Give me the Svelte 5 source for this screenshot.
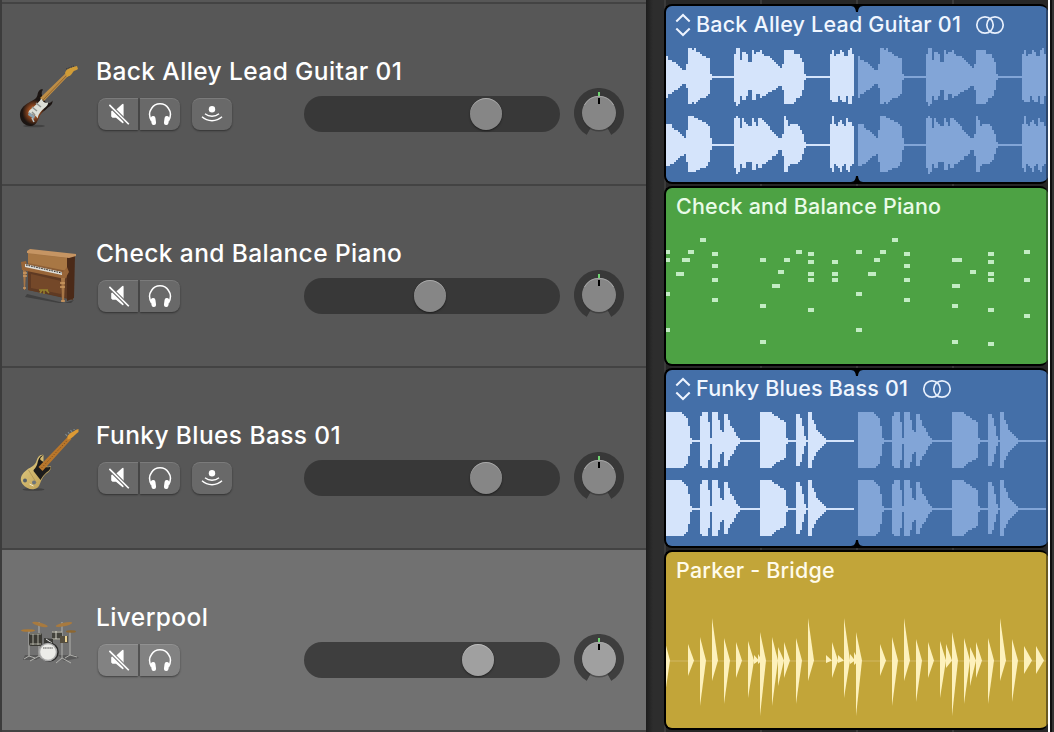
<script>
  // Waveform runs: [columns, units above the centre line, units below it]; one column is 2px wide.
  const leadTop = [
    [1,10,10],[2,8,8],[1,7,7],[1,7,6],[1,6,6],[1,5,5],[1,4,4],[2,3,3],[1,6,5],
    [2,14,13],[1,13,12],[1,14,13],[1,12,12],[1,12,11],[1,11,10],[2,10,10],[1,9,9],[1,9,8],[1,1,1],[11,0,0],
    [1,11,12],[1,14,14],[1,14,13],[1,8,9],[2,12,11],[1,11,9],[2,7,6],[1,13,11],[1,11,11],[2,12,8],[1,13,10],[1,11,9],
    [1,10,9],[1,10,8],[1,10,7],[1,9,7],[1,8,6],[1,7,6],[1,6,5],[1,5,4],[1,4,4],[1,6,6],
    [5,13,13],[1,11,12],[2,11,10],[1,9,9],[1,7,6],[1,1,1],[12,0,0],
    [1,11,11],[1,13,12],[1,10,12],[1,11,12],[1,11,9],[1,13,11],[1,12,12],[1,10,12],[1,10,9],[1,13,13],[1,14,13],[1,11,9]
  ];
  const leadBottom = [
    [1,10,10],[1,10,10],[1,10,9],[1,8,9],[1,7,8],[1,7,7],[1,6,6],[1,5,5],[1,4,5],[1,3,4],[1,7,8],
    [2,14,13],[1,14,13],[1,13,13],[1,13,12],[1,12,12],[1,12,11],[1,11,11],[1,11,11],[1,10,10],[1,9,8],[1,3,2],[11,0,0],
    [1,13,11],[1,14,14],[1,13,13],[1,8,9],[1,13,11],[1,11,11],[1,10,8],[2,9,8],[1,13,12],[1,11,12],[1,9,9],[2,13,11],[1,12,9],
    [1,11,9],[1,10,8],[1,9,7],[1,7,7],[1,6,5],[1,5,5],[1,4,4],[1,3,2],[1,3,2],[1,5,5],
    [1,14,13],[1,12,13],[1,9,10],[2,10,9],[2,10,9],[1,9,8],[1,7,7],[1,5,4],[1,1,1],[12,0,0],
    [1,10,11],[1,14,13],[1,10,9],[1,9,10],[1,11,11],[1,12,13],[1,10,10],[1,9,9],[1,13,12],[1,11,13],[1,11,10],[1,9,9]
  ];
  const bass = [
    [8,14,13],[1,13,13],[1,12,12],[1,11,11],[1,7,7],[1,1,1],[4,0,0],
    [1,12,12],[3,14,13],[1,9,9],[1,1,1],[3,14,13],[1,10,10],[1,5,6],[1,4,5],[2,13,12],[1,10,9],[1,7,7],[1,6,6],[1,4,4],[1,2,2],[1,1,1],[10,0,0],
    [6,14,13],[1,13,12],[1,12,11],[1,12,10],[1,11,10],[1,10,9],[1,10,9],[1,9,8],[1,1,1],[4,0,0],
    [2,13,12],[1,11,10],[1,7,6],[1,2,2],[1,0,0],[2,14,13],[1,10,9],[1,8,7],[1,5,5],[1,4,4],[1,3,3],[1,2,2],[1,1,1],[14,0,0]
  ];

  function wave(runs, y) {
    let x = 0;
    let d = '';
    for (const [n, up, down] of runs) {
      d += `M${x} ${y - up * 2}h${n * 2}v${(up + down) * 2 + 2}h${-n * 2}z`;
      x += n * 2;
    }
    return d;
  }

  // MIDI notes: [x, y, width] in pixels from the region's corner.
  const notes = [
    [0,62,4],[0,70,4],[16,70,8],[22,62,6],[34,50,6],[46,64,6],[46,76,6],[46,90,6],[46,110,6],[10,84,8],[0,104,4],[0,140,4],
    [94,70,6],[94,116,6],[94,152,6],[106,96,8],[112,82,6],[118,70,6],[130,62,6],[142,64,6],[142,72,6],[142,84,6],[142,90,6],[142,120,6],
    [166,72,6],[166,84,6],[166,90,6],[190,62,6],[190,104,6],[190,140,6],[214,62,6],[208,70,6],[202,84,8],[226,50,6],
    [238,64,6],[238,76,6],[238,90,6],[238,110,6],[286,70,10],[286,96,8],[286,116,6],[286,152,6],[304,82,6],
    [322,64,6],[322,72,6],[322,84,6],[322,90,6],[322,120,6],[322,154,6],[358,62,6],[358,90,6],[358,126,6]
  ];

  // Drum hits: [x, top, bottom, width].
  const hits = [
    [-2,86,149,6],[22,92,124,6],[34,85,154,6],[46,66,129,6],[58,86,152,6],[70,90,126,6],[82,89,146,6],[88,103,112,5],[92,102,112,4],
    [94,80,164,6],[106,85,154,6],[112,95,134,6],[118,90,126,6],[130,86,152,6],[142,66,129,6],[160,103,111,6],[166,90,126,6],[172,103,111,6],
    [178,66,146,6],[184,102,112,5],[188,100,113,5],[190,80,164,6],[214,92,124,6],[226,85,154,6],[238,66,129,6],[250,87,150,6],
    [262,90,126,6],[274,89,146,6],[280,92,116,6],[286,80,164,6],[298,86,152,6],[304,95,134,6],[310,90,126,6],[322,86,152,6],
    [334,66,129,6],[346,87,150,6],[358,94,122,8],[370,94,122,8]
  ];

  const tracks = [
    { name: 'Back Alley Lead Guitar 01', icon: 'strat', input: true, volume: 182, kind: 'audio', color: 'blue', top: leadTop, bottom: leadBottom },
    { name: 'Check and Balance Piano', icon: 'piano', input: false, volume: 126, kind: 'midi', color: 'green' },
    { name: 'Funky Blues Bass 01', icon: 'bass', input: true, volume: 182, kind: 'audio', color: 'blue', top: bass, bottom: bass },
    { name: 'Liverpool', icon: 'drums', input: false, volume: 174, kind: 'drummer', color: 'gold', region: 'Parker - Bridge', selected: true }
  ];
</script>

<div class="window">
  <div class="headers">
    {#each tracks as t}
      <section class="track" class:selected={t.selected}>
        <div class="instrument">
          {#if t.icon === 'strat'}
            <svg width="64" height="66" viewBox="0 0 64 66">
              <defs>
                <radialGradient id="burst" cx=".42" cy=".62" r=".5"><stop offset="0" stop-color="#d87f35"/><stop offset=".35" stop-color="#8c451e"/><stop offset=".7" stop-color="#1c1512"/></radialGradient>
              </defs>
              <ellipse cx="16" cy="61" rx="11" ry="1.300" fill="#333" opacity=".6"/>
              <path d="M25 24.500c-3-1-5 2-5.500 5.500-1 4-4 5-8.500 7.500-6 3.500-9.500 7-9 13.500.5 6 5.500 10.500 11 10 5-.5 6-4 8-8.500 2-5 5-6 8-9 3-2.500 6-4 5.500-8-2 3-5 3.500-7 1.500l-2.500-4.500c-1.500-3-2-5 0-8z" fill="url(#burst)"/>
              <path d="M23.500 33c-2 4-5 6-7 8-3 3-6 4-6 7 3 1 7 1 9 5.500 1-5 4-8 6.500-10s4.500-4 4-6c-3 1-5 0-6.500-4.500z" fill="#dcded6"/>
              <path d="m14 42 5 4m-1-8 5 4m-9 5 3 3" stroke="#8e918c" stroke-width="1.500"/>
              <path d="m11 47 6 4-1 3-6-4z" fill="#8aa2b0"/><path d="m14 53 2 4" stroke="#b8c5c9" stroke-width="1.500"/>
              <path d="m22 33 28-27 2.500 2.500L26 36z" fill="#bd8d46"/><path d="M25 35 51 8" stroke="#855a27" stroke-width=".8"/>
              <path d="M47 8c1-4 5-5 8-6l4-1 1 3c-2 2-4 1-5 3-2 4-4 4-6 5z" fill="#d09c37"/>
              <path d="m48 4 8-3" stroke="#3b3733" stroke-width="1" stroke-dasharray="1.500 1"/>
            </svg>
          {:else if t.icon === 'bass'}
            <svg width="64" height="66" viewBox="0 0 64 66">
              <defs><linearGradient id="cream" x2="1" y2="1"><stop stop-color="#e4cf86"/><stop offset="1" stop-color="#b9994e"/></linearGradient></defs>
              <g transform="translate(-1.500 0)">
              <ellipse cx="17" cy="60.500" rx="11" ry="1.300" fill="#333" opacity=".6"/>
              <path d="M27 26c-4-1-6 3-7 6-2 6-7 6-11 10-5 4-6 9-3 13 3 4 8 6 12 5 5-1 5-5 7-9s4-6 7-8c2-2 3-4 2-6-3 2-5 0-7-3z" fill="url(#cream)"/>
              <path d="M27 26c-4 1-5 4-6 8-1 5-4 6-4 8l7 9c3-5 5-7 8-9 2-2 3-4 1-4-4 1-7-1-6-5l-3-2c-1-2 1-3 3-5z" fill="#1d1c1b"/>
              <path d="m12 41 8 13" stroke="#ad9253" stroke-width=".8"/>
              <circle cx="8.500" cy="51.500" r="2" fill="#566068"/><circle cx="17.500" cy="53.500" r="2" fill="#6c747a"/><path d="m13 55 4 2" stroke="#efe9cf"/>
              <path d="M22 38 52 7l3 3-29 32z" fill="#b8762b"/><path d="m25 39 28-30" stroke="#75471c" stroke-width="1" stroke-dasharray="1 2"/>
              <path d="M51 7c3-4 6-4 8-6l3-1v3c-3 2-4 4-7 6l-4 2z" fill="#dc9a35"/>
              <path d="m49 5 1.500 2m1-4 1.500 2m1-4 1.500 2m1-4 1.500 2" stroke="#7d8c93" stroke-width="1.100"/>
              </g>
            </svg>
          {:else if t.icon === 'piano'}
            <svg class="piano-art" width="58" height="58" viewBox="0 0 58 58">
              <defs><linearGradient id="wood" x2="0" y2="1"><stop stop-color="#a97a48"/><stop offset=".5" stop-color="#7b4f2d"/><stop offset="1" stop-color="#55331d"/></linearGradient></defs>
              <path d="m6 45 37 9 10-3-3 3-12 0L4 48z" fill="#2e2e2e" opacity=".55"/>
              <path d="m7 3 45 4v44l-45-10z" fill="url(#wood)"/>
              <path d="m46 8 8-2-1 43-7 3z" fill="#4b2a18"/>
              <path d="m6 2 3-2 46 5v2l-7 2L6 4z" fill="#c69563"/>
              <path d="m7 5 39 4v13L7 14z" fill="#a87744"/>
              <path d="m7 21 39 8v20L7 41z" fill="#5f3a23"/><path d="m10 25 30 7v13l-30-6z" fill="#744829"/>
              <path d="m0 13 5-1 1 4 36 7 4-5 2 5-4 7L1 21z" fill="#986538"/>
              <path d="m4 15 37 8v3L4 18z" fill="#deded9"/><path d="m5 16 36 8" stroke="#292522" stroke-width="1" stroke-dasharray="1.600 1"/>
              <path d="m2 21 3 1-1 19H3zm38 8h4l-1 24h-2z" fill="#a87646"/>
              <path d="M2 24h4M2 27h4M2 39h3M39 34h5M39 38h5M40 52h4" stroke="#cb9961" stroke-width="1.300"/>
              <path d="M18 41h9m-6 0-2 3m4-3v4m2-4 3 3" stroke="#94812d" stroke-width="1.500"/>
            </svg>
          {:else}
            <svg class="drum-art" width="58" height="48" viewBox="0 0 58 48">
              <path d="M4 35h20l-9 5H2zm33 0h17l4 3-15 3z" fill="#454545" opacity=".55"/>
              <g stroke="#c4c4bf" stroke-width=".8" fill="none"><path d="M8 10v26l-5 3m5-3 6 2M18 2v34l-9 5m9-5 6 5M41 2v36l-6 5m6-5 9 5M49 11v24l-5 3m5-3 7 2"/></g>
              <rect x="8" y="13" width="13" height="13" rx="2" fill="#3a3933"/><path d="M9 14h11M9 24h11M12 14v11M17 14v11" stroke="#b7b7aa" stroke-width=".9"/>
              <rect x="31" y="11" width="10" height="9" rx="2" fill="#44433c"/><path d="M31 12h10M31 19h10M35 11v8" stroke="#d4d3c7"/>
              <rect x="39" y="16" width="8" height="7" fill="#544d3e"/><path d="M45 16v6" stroke="#ead191" stroke-width="2"/>
              <ellipse cx="7" cy="10.500" rx="7" ry="1.300" fill="#ac7a36"/><ellipse cx="19" cy="4.500" rx="8" ry="1.700" fill="#a87a3f" transform="rotate(15 19 4.500)"/>
              <ellipse cx="43" cy="4.500" rx="8.500" ry="1.700" fill="#a87a3f" transform="rotate(-12 43 4.500)"/><ellipse cx="50" cy="11.500" rx="5" ry="1.200" fill="#8e672f"/>
              <path d="m23 18 9 1v4l-9 1z" fill="#3b3b38"/><path d="m25 19 6 4" stroke="#ddd"/>
              <circle cx="28" cy="32" r="9.800" fill="#292929"/><circle cx="27" cy="32" r="9.300" fill="#aaa"/><circle cx="27" cy="32" r="7.800" fill="#ecece9"/>
              <path d="M22 28h10" stroke="#555" stroke-width="1.200" stroke-dasharray="1.300 .4"/>
            </svg>
          {/if}
        </div>
        <div class="body">
          <h2>{t.name}</h2>
          <div class="controls">
            <div class="group">
              <button class="first" aria-label="Mute">
                <svg class="mute" width="22" height="24" viewBox="0 0 22 24"><path d="M2.200 9.200 4 7.800h3l6.300-5.700q1.300-.8 1.300.8v17.300q0 1.600-1.300.8L7 15.800H3.500l-1.300-1.200z" fill="#fff"/><path d="m-.2 2.300 20.700 20.700" class="cut"/><path d="m.4 2.900 19.400 19.400" stroke="#fff" stroke-width="1.600"/></svg>
              </button>
              <button class="last" aria-label="Solo">
                <svg width="24" height="24" viewBox="0 0 24 24"><path d="M3.500 19C1 14.500 1.300 9.500 3.500 6.500 5.400 3.500 8.400 1.800 12 1.800s6.600 1.700 8.500 4.700c2.200 3 2.500 8 0 12.500" fill="none" stroke="#fff" stroke-width="1.500"/><rect x="3.100" y="14" width="4.600" height="9" rx="2.200" fill="#fff" transform="rotate(-8 5.300 18)"/><rect x="16.300" y="14" width="4.600" height="9" rx="2.200" fill="#fff" transform="rotate(8 18.700 18)"/></svg>
              </button>
            </div>
            {#if t.input}
              <button class="single" aria-label="Input monitoring">
                <svg width="24" height="18" viewBox="0 0 24 18"><circle cx="12" cy="4.300" r="3.200" fill="#fff"/><path d="M5 8.800c4 3.300 10 3.300 14 0M2 11.800c5.500 5.200 14.500 5.200 20 0" fill="none" stroke="#fff" stroke-width="1.400"/></svg>
              </button>
            {/if}
            <div class="slider"><span class="thumb" style:margin-left={t.volume - 16 + 'px'}></span></div>
            <svg class="pan" width="50" height="50" viewBox="0 0 50 50">
              <path d="M13 46.900A25 25 0 1 1 37 46.900L32.900 39.500H17.100Z" class="ring"/>
              <path d="M12.500 47.500 16.800 39.800 25 35l8.200 4.800 4.300 7.700V50h-25z" class="gap"/>
              <circle cx="25" cy="26.300" r="17.200" fill="#292929" opacity=".45"/>
              <circle cx="25" cy="25" r="17" class="cap"/>
              <path d="M10.500 17a16.500 16.500 0 0 1 29 0" fill="none" stroke="#aaa" stroke-width=".9"/>
              <path d="M25 4v4" stroke="#70d472" stroke-width="2"/><path d="M25 10v6" stroke="#000" stroke-width="2"/>
            </svg>
          </div>
        </div>
      </section>
    {/each}
  </div>

  <div class="timeline">
    {#each tracks as t}
      <div class="lane">
        <article class="region {t.color}">
          <svg class="content" width="382" height="176" viewBox="0 0 382 176">
            {#if t.kind === 'audio'}
              <g shape-rendering="crispEdges">
                <path d={wave(t.top, 70) + wave(t.bottom, 138)} fill="#d5e4fb"/>
                <path d={wave(t.top, 70) + wave(t.bottom, 138)} fill="#82a5d7" transform="translate(192 0)"/>
                <path d="M380 0h2v176h-2z" fill="#2c466b"/>
              </g>
              <path d="M185 0c3 .3 4.500 1.500 5 6h2c.5-4.500 2-5.700 5-6zM185 176c3-.3 4.500-1.500 5-6h2c.5 4.500 2 5.700 5 6z" fill="#000"/>
            {:else if t.kind === 'midi'}
              {#each notes as [x, y, w]}<rect {x} {y} width={w} height="4" fill="#c3ecc4"/>{/each}
              <path d="M380 0h2v176h-2z" fill="#30602a"/>
            {:else}
              <path d="M0 108h380v2H0z" fill="#c9ae4e"/>
              {#each hits as [x, top, bottom, w]}<path d="M{x} {top}L{x + w} 108.500L{x} {bottom}z" fill="#fdf1bc"/>{/each}
              <path d="M380 0h2v176h-2z" fill="#6c5b20"/>
            {/if}
          </svg>
          <header>
            {#if t.kind === 'audio'}
              <svg class="chevrons" width="16" height="24" viewBox="0 0 16 24"><path d="m1.300 8.500 6.700-6.500 6.700 6.500M1.300 15.500 8 22l6.700-6.500" fill="none" stroke="#eef4ff" stroke-width="2"/></svg>
            {/if}
            <span>{t.region ?? t.name}</span>
            {#if t.kind === 'audio'}
              <svg class="rings" width="30" height="20" viewBox="0 0 30 20"><g fill="none" stroke="#e7effc" stroke-width="1.700"><circle cx="10" cy="10" r="8.200"/><circle cx="20" cy="10" r="8.200"/></g></svg>
            {/if}
          </header>
        </article>
      </div>
    {/each}
  </div>
  <div class="playhead"></div>
  <div class="margin"></div>
</div>

<style>
  :global(body) { background: #2b2b2b; overflow: hidden; }
  .window {
    display: grid;
    grid-template-columns: 646px 402px 2px 4px;
    width: 1054px;
    height: 732px;
    overflow: hidden;
    font-family: Inter, "Liberation Sans", sans-serif;
    color: #fff;
  }
  .headers { box-sizing: border-box; height: 732px; padding-top: 2px; background: #575757; border-left: 2px solid #3c3c3c; }
  .headers::after { content: ""; display: block; height: 2px; background: #434343; }
  .track {
    --face: #575757; --cap: #868686; --key: #696969; --groove: #383838;
    box-sizing: border-box;
    display: flex;
    height: 182px;
    border-top: 2px solid #434343;
    background: var(--face);
  }
  .track.selected { --face: #717171; --cap: #a0a0a0; --key: #828282; --groove: #3e3e3e; }
  .instrument { width: 94px; padding: 61px 0 0 16px; box-sizing: border-box; }
  .piano-art { margin: 2px 0 0 3px; }
  .drum-art { margin: 9px 0 0 3px; }
  .body { flex: 1; padding-top: 48px; }
  h2 { margin: 0; height: 38px; font-size: 24.5px; font-weight: 500; line-height: 38px; letter-spacing: .4px; white-space: nowrap; }
  .controls { display: flex; align-items: center; width: 526px; height: 32px; margin: 8px 0 0 2px; }
  .group { display: flex; gap: 2px; margin-right: 12px; background: #525252; border-radius: 8px; }
  .selected .group { background: #606060; }
  button {
    display: grid;
    place-items: center;
    width: 40px;
    height: 32px;
    padding: 0;
    border: 0;
    border-radius: 8px;
    background: var(--key);
    box-shadow: inset 0 1px 0 #ffffff20, 0 1px 2px #00000070;
  }
  .first { border-radius: 8px 0 0 8px; }
  .last { border-radius: 0 8px 8px 0; }
  .mute { margin-left: 3px; }
  .cut { stroke: var(--key); stroke-width: 3.8; }
  .slider { width: 256px; height: 36px; margin: -2px 14px -2px auto; border-radius: 18px; background: var(--groove); }
  .thumb {
    display: block;
    width: 32px;
    height: 32px;
    margin-top: 2px;
    border-radius: 50%;
    background: var(--cap);
    box-shadow: inset 0 1px 0 #ffffff50, 0 1px 2px #00000080;
  }
  .pan { flex: none; margin: -10px 0 -8px; }
  .ring { fill: var(--groove); }
  .gap { fill: var(--face); }
  .cap { fill: var(--cap); }
  .timeline {
    padding: 2px 0 0 18px;
    background:
      linear-gradient(90deg, #1d1d1d, #2d2d2d 7px, transparent 7px),
      linear-gradient(90deg, #2d2d2d 18px, transparent 18px),
      repeating-linear-gradient(90deg, transparent 0 18px, #3b3b3b 18px 20px, transparent 20px 96px),
      #272727;
  }
  .lane { height: 180px; padding-top: 2px; }
  .region {
    display: grid;
    box-sizing: border-box;
    width: 384px;
    height: 180px;
    overflow: hidden;
    border: 2px solid #000;
    border-right: 0;
    border-radius: 8px;
  }
  .content, header { grid-area: 1 / 1; }
  .blue { background: #446fa8; }
  .green { background: #4da244; }
  .gold { background: #c2a539; }
  header { display: flex; align-items: center; height: 36px; padding-left: 10px; font-size: 21.5px; font-weight: 500; letter-spacing: .2px; color: #f0f6ff; white-space: nowrap; }
  .green header { color: #e9fbe8; }
  .gold header { color: #fffbea; }
  .chevrons { width: 16px; margin: 2px 5px 0 -1px; }
  .rings { margin: 1px 0 0 14px; }
  .playhead { background: #fff; }
  .margin { background: linear-gradient(90deg, #111 2px, #343434 2px); }
</style>
